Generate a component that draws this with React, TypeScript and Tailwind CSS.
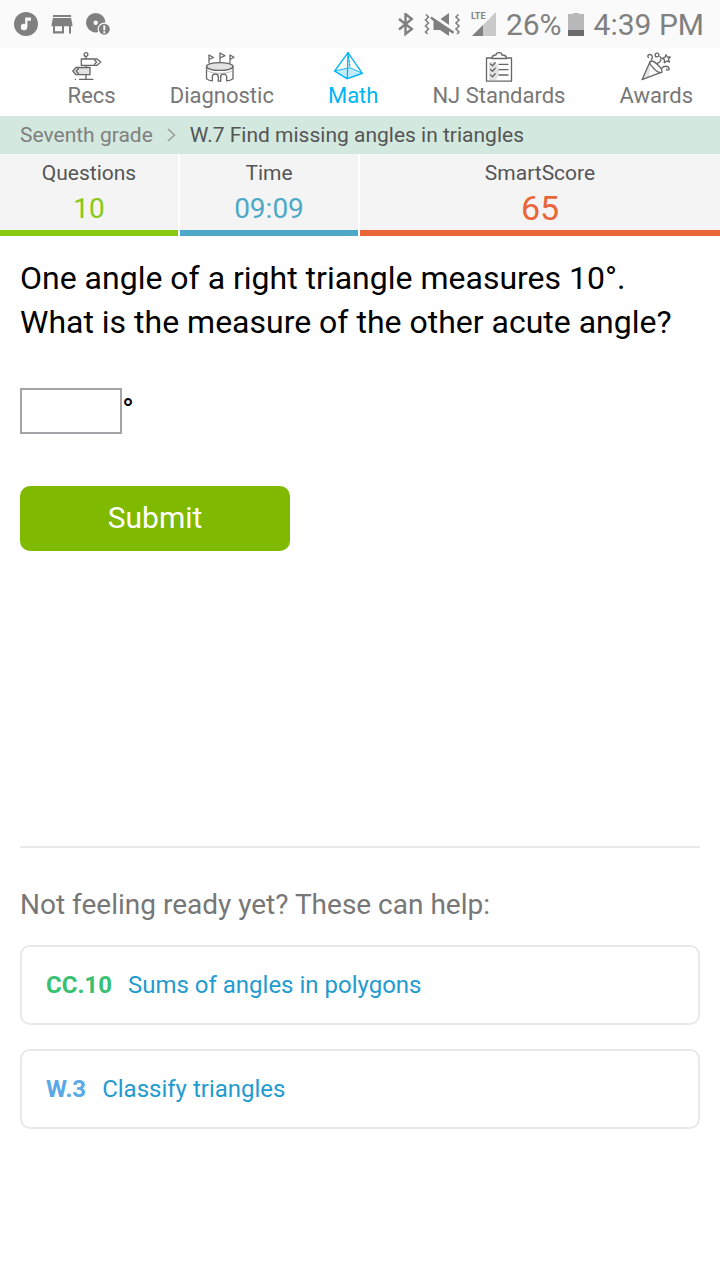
import React, { useState } from 'react';

const MusicIcon = () => (
  <svg width="24" height="24" viewBox="0 0 24 24" fill="#808080">
    <circle cx="12" cy="12" r="12" />
    <circle cx="10" cy="15" r="3.2" fill="#fafafa" />
    <path d="M11.2 5.5h5.8v3.2h-3.6V15h-2.2z" fill="#fafafa" />
  </svg>
);

const StoreIcon = () => (
  <svg width="22" height="24" viewBox="0 0 22 24" fill="#808080">
    <path d="M2 3h18v2H2zM2 6h18l1.400 6v2.200H20v7.300h-2v-7.300h-5v7.300H2v-7.300H.6V12zM4 14.200v5h7v-5z" fillRule="evenodd" />
  </svg>
);

const DiscAlertIcon = () => (
  <svg width="24" height="24" viewBox="0 0 24 24">
    <circle cx="9.700" cy="10.700" r="9.700" fill="#808080" />
    <circle cx="9.700" cy="10.700" r="2.200" fill="#fafafa" />
    <circle cx="18.300" cy="17.200" r="6.700" fill="#fafafa" />
    <circle cx="18.300" cy="17.200" r="5.500" fill="#808080" />
    <path d="M17.300 13.500h2v4.700h-2zM17.300 19.200h2v2h-2z" fill="#fafafa" />
  </svg>
);

const BluetoothIcon = () => (
  <svg width="18" height="24" viewBox="0 0 18 24" fill="none" stroke="#808080" strokeWidth="2.400">
    <path d="M3 6L15.800 16 9.500 21V1l6.300 5L3 16.500" />
  </svg>
);

const VibrateMuteIcon = () => (
  <svg width="38" height="24" viewBox="0 0 38 24">
    <path d="M2 1.500L4.500 4l-3 3 3 3-3 3 3 3-3 3 2 2M34.500 1.500L32 4l3 3-3 3 3 3-3 3 3 3-2 2" fill="none" stroke="#808080" strokeWidth="1.600" />
    <path d="M25 0v12L16.500 6zM7.500 3.500l22.800 15.300-1.300 2-4-2.600V23l-9-6H9.500V8L6.200 5.500z" fill="#808080" />
  </svg>
);

const SignalIcon = () => (
  <svg width="24" height="24" viewBox="0 0 24 24" className="overflow-visible">
    <path d="M24-1v24H0z" fill="#c9c9c9" />
    <path d="M11 12v11H0z" fill="#808080" />
    <path d="M0-2h17v9H0z" fill="#fafafa" />
    <text x="-1" y="6" fontFamily="Roboto, sans-serif" fontSize="9" fontWeight="700" fill="#808080">LTE</text>
  </svg>
);

const BatteryIcon = () => (
  <svg width="16" height="24" viewBox="0 0 16 24">
    <path d="M5 0h6v1h5v16H0V1h5z" fill="#b8b8b8" />
    <path d="M0 17h16v6H0z" fill="#6b6b6b" />
  </svg>
);

const NavIcon: React.FC<{ children: React.ReactNode }> = ({ children }) => (
  <svg width="40" height="32" viewBox="0 0 40 32" fill="none" stroke="#666" strokeWidth="1.300" strokeLinejoin="round" strokeLinecap="round">
    {children}
  </svg>
);

const SignpostIcon = () => (
  <NavIcon>
    <circle cx="14" cy="4.500" r="1.900" />
    <path d="M14 6.500v2.200M14 15.500v1.800M14 25v4.300M7.500 29.300H21M3.300 29.300h.3" />
    <path d="M9.300 9H25l3.700 3.100-3.700 3.200H9.300z" fill="#fff" />
    <path d="M22.500 10l2.200 2.100-2.200 2.200" />
    <path d="M18 17.500H4L.8 21 4 24.700h14z" fill="#e2e2e2" />
    <path d="M6.500 18.700L4.200 21l2.300 2.500" />
  </NavIcon>
);

const CastleIcon = () => (
  <NavIcon>
    <path d="M7 12.500V5l4.500 2.500L7 9.500M18 11.500V3l5 2.700-5 2.300M28 12.500V5l4 2.300-4 2.200" />
    <path d="M4.500 16.500v12.200c1.500 1.200 3.500 2 5.800 2.200V27a3 3 0 0 1 6 0v4.200h2.400V27a3 3 0 0 1 6 0v3.900c2.300-.2 4.800-1 6.300-2.200V16.500" />
    <path d="M5 18v2.500c5 3.800 21 3.800 26 0V18" stroke="#aaa" strokeWidth=".8" />
    <ellipse cx="17.800" cy="16.500" rx="13.200" ry="3.900" fill="#e2e2e2" />
  </NavIcon>
);

const PyramidIcon = () => (
  <NavIcon>
    <g stroke="#00b5f5">
      <path d="M1.700 21L17 17.700l12.300 5.600-15 5.400z" fill="#c4eafb" strokeWidth=".9" />
      <path d="M15 2.700L17 17.700" strokeDasharray="2 1.800" />
      <path d="M15 2.700L1.700 21l12.600 7.700 15-5.400zM15 2.700l-.7 26" />
    </g>
  </NavIcon>
);

const ClipboardIcon = () => (
  <NavIcon>
    <path d="M10 12h5c6 2 6 14 2 18h-7z" fill="#e2e2e2" stroke="none" />
    <path d="M13 8H7.500v23.200h25V8H27" />
    <path d="M13 8.500c0-2.500 1-3.500 4-3.500 0-1.500 1-2.300 3-2.300s3 .8 3 2.300c3.300 0 4.500 1 4.500 3.500z" fill="#fff" />
    <path d="M11.500 14l2 1.700 2.700-3M11.500 19.500l2 1.700 2.700-3M11.500 25l2 1.700 2.700-3M20 14.300h9M20 19.700h9M20 25h9" />
  </NavIcon>
);

const PartyIcon = () => (
  <NavIcon>
    <path d="M14 11.700L6 29.700l7-3 1.500-13z" fill="#e2e2e2" stroke="none" />
    <path d="M14 11.700L6 29.700l19.700-7.500" />
    <path d="M14 11.700c1.500-1.500 5 .3 8 3.300s5 6 3.700 7.200c-1.500 1-5-.8-7.700-3.500s-5-5.700-4-7z" />
    <path d="M12.500 7.500c-1.500-1-.5-3 1.300-3 2.700 0 3.200 3 1.700 5M24 6.500c2 2 1 5.500-3 7M25.700 18.500c1.500-3 6.500-3 7.500 0 .3 1.800-2.200 2.300-2.700.7" />
    <circle cx="21" cy="5" r="1.900" />
    <path d="M30 4.700l1.400 2.500 2.800-.2-1.900 2.300 1.200 2.700-2.800-.9-2.300 1.600v-2.900L26 8.300l2.900-.8z" />
  </NavIcon>
);

const navItems = [
  { label: 'Recs', icon: <SignpostIcon /> },
  { label: 'Diagnostic', icon: <CastleIcon /> },
  { label: 'Math', icon: <PyramidIcon />, active: true },
  { label: 'NJ Standards', icon: <ClipboardIcon /> },
  { label: 'Awards', icon: <PartyIcon /> },
];

const helpLinks = [
  { code: 'CC.10', title: 'Sums of angles in polygons', color: 'text-[#38c172]' },
  { code: 'W.3', title: 'Classify triangles', color: 'text-[#5aa9e6]' },
];

const App: React.FC = () => {
  const [answer, setAnswer] = useState('');

  return (
    <div className="min-h-screen bg-white font-[Roboto,sans-serif]">
      <div className="flex h-12 items-center justify-between bg-[#fafafa] pl-[14px] pr-4 text-[#808080]">
        <div className="flex items-center gap-[13px]">
          <MusicIcon />
          <StoreIcon />
          <DiscAlertIcon />
        </div>
        <div className="flex items-center pt-0.5 text-[30px] leading-[46px]">
          <div className="flex items-center gap-[10px]">
            <BluetoothIcon />
            <VibrateMuteIcon />
            <SignalIcon />
            <span>26%</span>
          </div>
          <div className="ml-1.5 flex items-center gap-[10px]">
            <BatteryIcon />
            <span>4:39 PM</span>
          </div>
        </div>
      </div>

      <nav className="flex h-[68px] justify-end gap-[54px] pr-[27px] pt-0.5">
        {navItems.map((item) => (
          <a
            key={item.label}
            href="#"
            className={`flex flex-col items-center text-[22px] leading-7 ${item.active ? 'text-[#00b5f5]' : 'text-[#777]'}`}
          >
            {item.icon}
            <span>{item.label}</span>
          </a>
        ))}
      </nav>

      <div className="flex h-[38px] items-center bg-[#d3e8de] px-5 text-[21px] leading-[38px]">
        <a href="#" className="text-[#808080]">Seventh grade</a>
        <svg className="mx-3.5" width="9" height="14" viewBox="0 0 9 14" fill="none" stroke="#999" strokeWidth="1.500">
          <path d="M1 1l6.500 6L1 13" />
        </svg>
        <span className="text-[#555]">W.7 Find missing angles in triangles</span>
      </div>

      <div className="grid grid-cols-4 text-center text-[#555]">
        <div className="pr-0.5">
          <div className="h-[82px] border-b-[6px] border-[#8ac912] bg-[#f4f4f4]">
            <div className="text-[21px] leading-[38px]">Questions</div>
            <div className="text-[28px] leading-[34px] text-[#8ac912]">10</div>
          </div>
        </div>
        <div className="pr-0.5">
          <div className="h-[82px] border-b-[6px] border-[#4da9c7] bg-[#f4f4f4]">
            <div className="text-[21px] leading-[38px]">Time</div>
            <div className="text-[28px] leading-[34px] text-[#4da9c7]">09:09</div>
          </div>
        </div>
        <div className="col-span-2 h-[82px] border-b-[6px] border-[#e86637] bg-[#f4f4f4]">
          <div className="text-[21px] leading-[38px]">SmartScore</div>
          <div className="text-[34px] leading-8 text-[#e86637]">65</div>
        </div>
      </div>

      <main className="px-5 pb-8 pt-5">
        <form onSubmit={(e) => e.preventDefault()}>
          <label htmlFor="answer" className="block text-[32px] leading-[44px] text-black">
            One angle of a right triangle measures 10°.
            <br />
            What is the measure of the other acute angle?
          </label>
          <div className="mt-11 flex h-[46px] text-[32px] leading-[44px] text-black">
            <input
              id="answer"
              type="text"
              inputMode="numeric"
              value={answer}
              onChange={(e) => setAnswer(e.target.value)}
              className="w-[102px] border-2 border-[#a3a3a8] bg-white px-2 outline-none"
            />
            <span>°</span>
          </div>
          <button type="submit" className="mt-[52px] h-[65px] w-[270px] rounded-[10px] bg-[#7fba00] pb-0.5 text-[30px] text-white">
            Submit
          </button>
        </form>

        <section className="mt-[295px] border-t-2 border-[#e8e8e8] pt-9">
          <h2 className="text-[28px] leading-[42px] text-[#777]">Not feeling ready yet? These can help:</h2>
          <div className="mt-[19px] flex flex-col gap-6">
            {helpLinks.map((link) => (
              <a
                key={link.code}
                href="#"
                className="flex h-20 items-center gap-4 rounded-[10px] border-2 border-[#e8e8e8] px-6 text-2xl text-[#1f9bcf]"
              >
                <span className={`font-bold ${link.color}`}>{link.code}</span>
                <span>{link.title}</span>
              </a>
            ))}
          </div>
        </section>
      </main>
    </div>
  );
};

export default App;
